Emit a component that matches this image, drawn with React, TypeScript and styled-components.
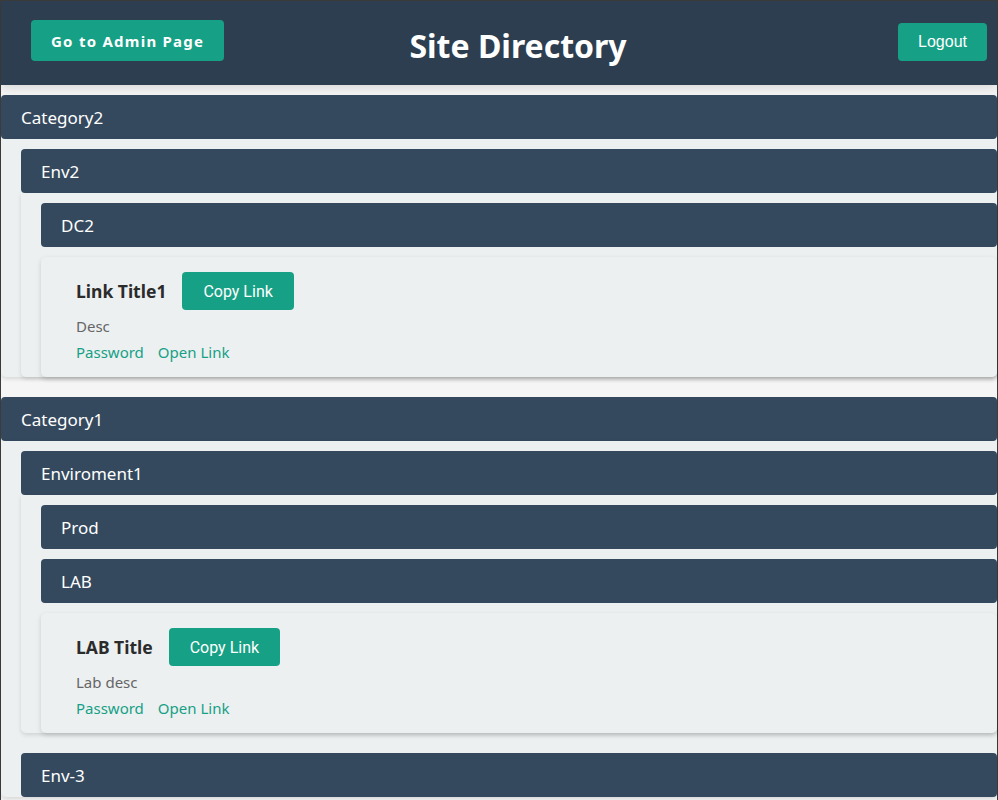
import React from "react";
import styled, { createGlobalStyle } from "styled-components";

const GlobalStyle = createGlobalStyle`
  html, body { margin: 0; padding: 0; background: #f5f5f5; }
  body { font-family: "Noto Sans", "Open Sans", sans-serif; }
  * { box-sizing: border-box; }
`;

const Frame = styled.div`
  min-height: 800px;
  border-left: 1px solid #3c3c3c;
  border-right: 1px solid #3c3c3c;
  border-top: 1px solid #3c3c3c;
  background: #f5f5f5;
`;

const Header = styled.header`
  height: 84px;
  background: #2d3e50;
  display: grid;
  grid-template-columns: 1fr auto 1fr;
  align-items: start;
  padding: 0 10px 0 30px;
  box-shadow: 0 3px 10px rgba(0, 0, 0, 0.12);
  margin-bottom: 10px;
`;

const AdminButton = styled.button`
  justify-self: start;
  margin-top: 19px;
  height: 41px;
  padding: 0 20px;
  border: none;
  border-radius: 4px;
  background: #16a085;
  color: #fff;
  font-family: "Noto Sans", sans-serif;
  font-weight: 700;
  font-size: 15px;
  letter-spacing: 1.25px;
`;

const Title = styled.h1`
  margin: 24px 0 0 18px;
  color: #fff;
  font-family: "Noto Sans", sans-serif;
  font-weight: 700;
  font-size: 32px;
  line-height: 42px;
`;

const LogoutButton = styled.button`
  justify-self: end;
  margin-top: 22px;
  height: 38px;
  padding: 0 20px;
  border: none;
  border-radius: 4px;
  background: #16a085;
  color: #fff;
  font-family: "Liberation Sans", Arial, sans-serif;
  font-size: 16px;
`;

const List = styled.div`
  display: flex;
  flex-direction: column;
`;

const Item = styled.div<{ $hasBody: boolean }>`
  display: flex;
  flex-direction: column;
  margin-bottom: ${(p) => (p.$hasBody ? 20 : 10)}px;
  &:last-child { margin-bottom: 0; }
`;

const Bar = styled.div`
  height: 44px;
  display: flex;
  align-items: center;
  padding: 0 20px;
  background: #34495e;
  color: #fff;
  border-radius: 4px;
  font-size: 17px;
`;

const Panel = styled.div`
  background: #ecf0f1;
  padding: 10px 0 0 20px;
  border-radius: 0 0 5px 5px;
  box-shadow: 0 2px 4px rgba(0, 0, 0, 0.12);
`;

const LinkArea = styled.div`
  padding-top: 10px;
  display: flex;
  flex-direction: column;
  gap: 10px;
`;

const Card = styled.div`
  background: #ecf0f1;
  border-radius: 5px;
  box-shadow: 0 2px 5px rgba(0, 0, 0, 0.15);
  padding: 15px 15px 15px 35px;
`;

const TitleRow = styled.div`
  display: flex;
  align-items: center;
  gap: 16px;
  height: 38px;
`;

const LinkTitle = styled.h3`
  margin: 0;
  font-size: 17.5px;
  font-weight: 700;
  color: #2b2b2b;
`;

const CopyButton = styled.button`
  height: 38px;
  padding: 0 21px;
  border: none;
  border-radius: 4px;
  background: #16a085;
  color: #fff;
  font-family: Roboto, sans-serif;
  font-size: 16px;
`;

const Desc = styled.p`
  margin: 6px 0 0;
  line-height: 20px;
  font-size: 15px;
  color: #666;
`;

const Links = styled.div`
  margin-top: 6px;
  display: flex;
  gap: 14px;
  line-height: 20px;
`;

const TextLink = styled.a`
  font-size: 15px;
  color: #16a085;
  text-decoration: none;
`;

type LinkData = { title: string; desc: string };
type DC = { name: string; links: LinkData[] };
type Env = { name: string; dcs: DC[] };
type Category = { name: string; envs: Env[] };

const data: Category[] = [
  {
    name: "Category2",
    envs: [{ name: "Env2", dcs: [{ name: "DC2", links: [{ title: "Link Title1", desc: "Desc" }] }] }],
  },
  {
    name: "Category1",
    envs: [
      {
        name: "Enviroment1",
        dcs: [
          { name: "Prod", links: [] },
          { name: "LAB", links: [{ title: "LAB Title", desc: "Lab desc" }] },
        ],
      },
      { name: "Env-3", dcs: [] },
    ],
  },
];

const LinkCard = ({ link }: { link: LinkData }) => (
  <Card>
    <TitleRow>
      <LinkTitle>{link.title}</LinkTitle>
      <CopyButton>Copy Link</CopyButton>
    </TitleRow>
    <Desc>{link.desc}</Desc>
    <Links>
      <TextLink href="#">Password</TextLink>
      <TextLink href="#">Open Link</TextLink>
    </Links>
  </Card>
);

export default function App() {
  return (
    <Frame>
      <GlobalStyle />
      <Header>
        <AdminButton>Go to Admin Page</AdminButton>
        <Title>Site Directory</Title>
        <LogoutButton>Logout</LogoutButton>
      </Header>
      <List>
        {data.map((cat) => (
          <Item key={cat.name} $hasBody={cat.envs.length > 0}>
            <Bar>{cat.name}</Bar>
            {cat.envs.length > 0 && (
              <Panel>
                <List>
                  {cat.envs.map((env) => (
                    <Item key={env.name} $hasBody={env.dcs.length > 0}>
                      <Bar>{env.name}</Bar>
                      {env.dcs.length > 0 && (
                        <Panel>
                          <List>
                            {env.dcs.map((dc) => (
                              <Item key={dc.name} $hasBody={dc.links.length > 0}>
                                <Bar>{dc.name}</Bar>
                                {dc.links.length > 0 && (
                                  <LinkArea>
                                    {dc.links.map((l) => (
                                      <LinkCard key={l.title} link={l} />
                                    ))}
                                  </LinkArea>
                                )}
                              </Item>
                            ))}
                          </List>
                        </Panel>
                      )}
                    </Item>
                  ))}
                </List>
              </Panel>
            )}
          </Item>
        ))}
      </List>
    </Frame>
  );
}
